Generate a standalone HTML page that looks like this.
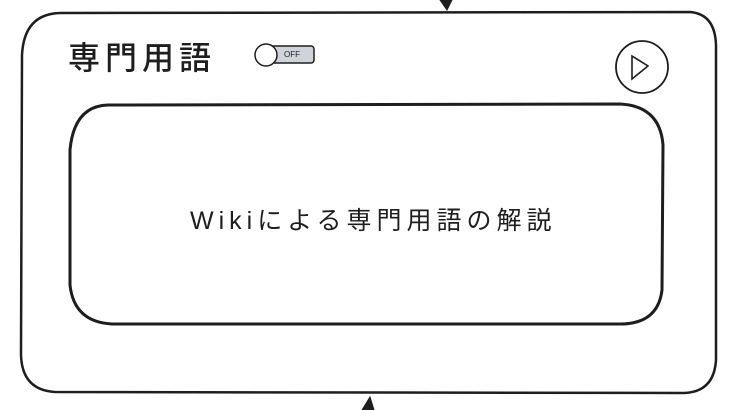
<!DOCTYPE html>
<html><head><meta charset="utf-8"><style>
html,body{margin:0;padding:0;background:#fff;width:736px;height:410px;overflow:hidden;position:relative}
.t{position:absolute;font-family:"Liberation Sans","Noto Sans CJK JP",sans-serif;color:#1e1e1e;white-space:nowrap}
</style></head><body>
<svg width="736" height="410" style="position:absolute;left:0;top:0" fill="none" stroke="#1e1e1e" stroke-linecap="round">
<path d="M60 13 L690 12 Q715 14 716 45 L716 360 Q714 392 684 393 L55 392 Q22 390 21 355 L22 55 Q24 14 60 13 Z" stroke-width="2.5"/>
<path d="M108 105 L620 104 Q660 106 663 145 L662 290 Q658 324 620 324 L112 324 Q74 322 70 285 L70 150 Q74 106 108 105 Z" stroke-width="3"/>
<path d="M440 0 L452 0 L447 10 Z" fill="#1e1e1e"/>
<path d="M362 410 L370 397 L374 410 Z" fill="#1e1e1e"/>
<rect x="266" y="46" width="48" height="17" rx="3" fill="#ced4da" stroke-width="1.5"/>
<circle cx="266" cy="55" r="11" fill="#fff" stroke-width="1.5"/>
<circle cx="642" cy="67" r="26" stroke-width="1.8"/>
<path d="M632 56 L648 66 L632 79 Z" stroke-width="1.6"/>
</svg>
<div class="t" style="left:284px;top:50px;font-size:8px">OFF</div>
<div class="t" style="left:68px;top:38px;font-size:32px;letter-spacing:5px;line-height:40px;font-weight:500">専門用語</div>
<div class="t" style="left:190px;top:205px;font-size:25px;letter-spacing:5px;line-height:32px">Wikiによる専門用語の解説</div>
</body></html>
